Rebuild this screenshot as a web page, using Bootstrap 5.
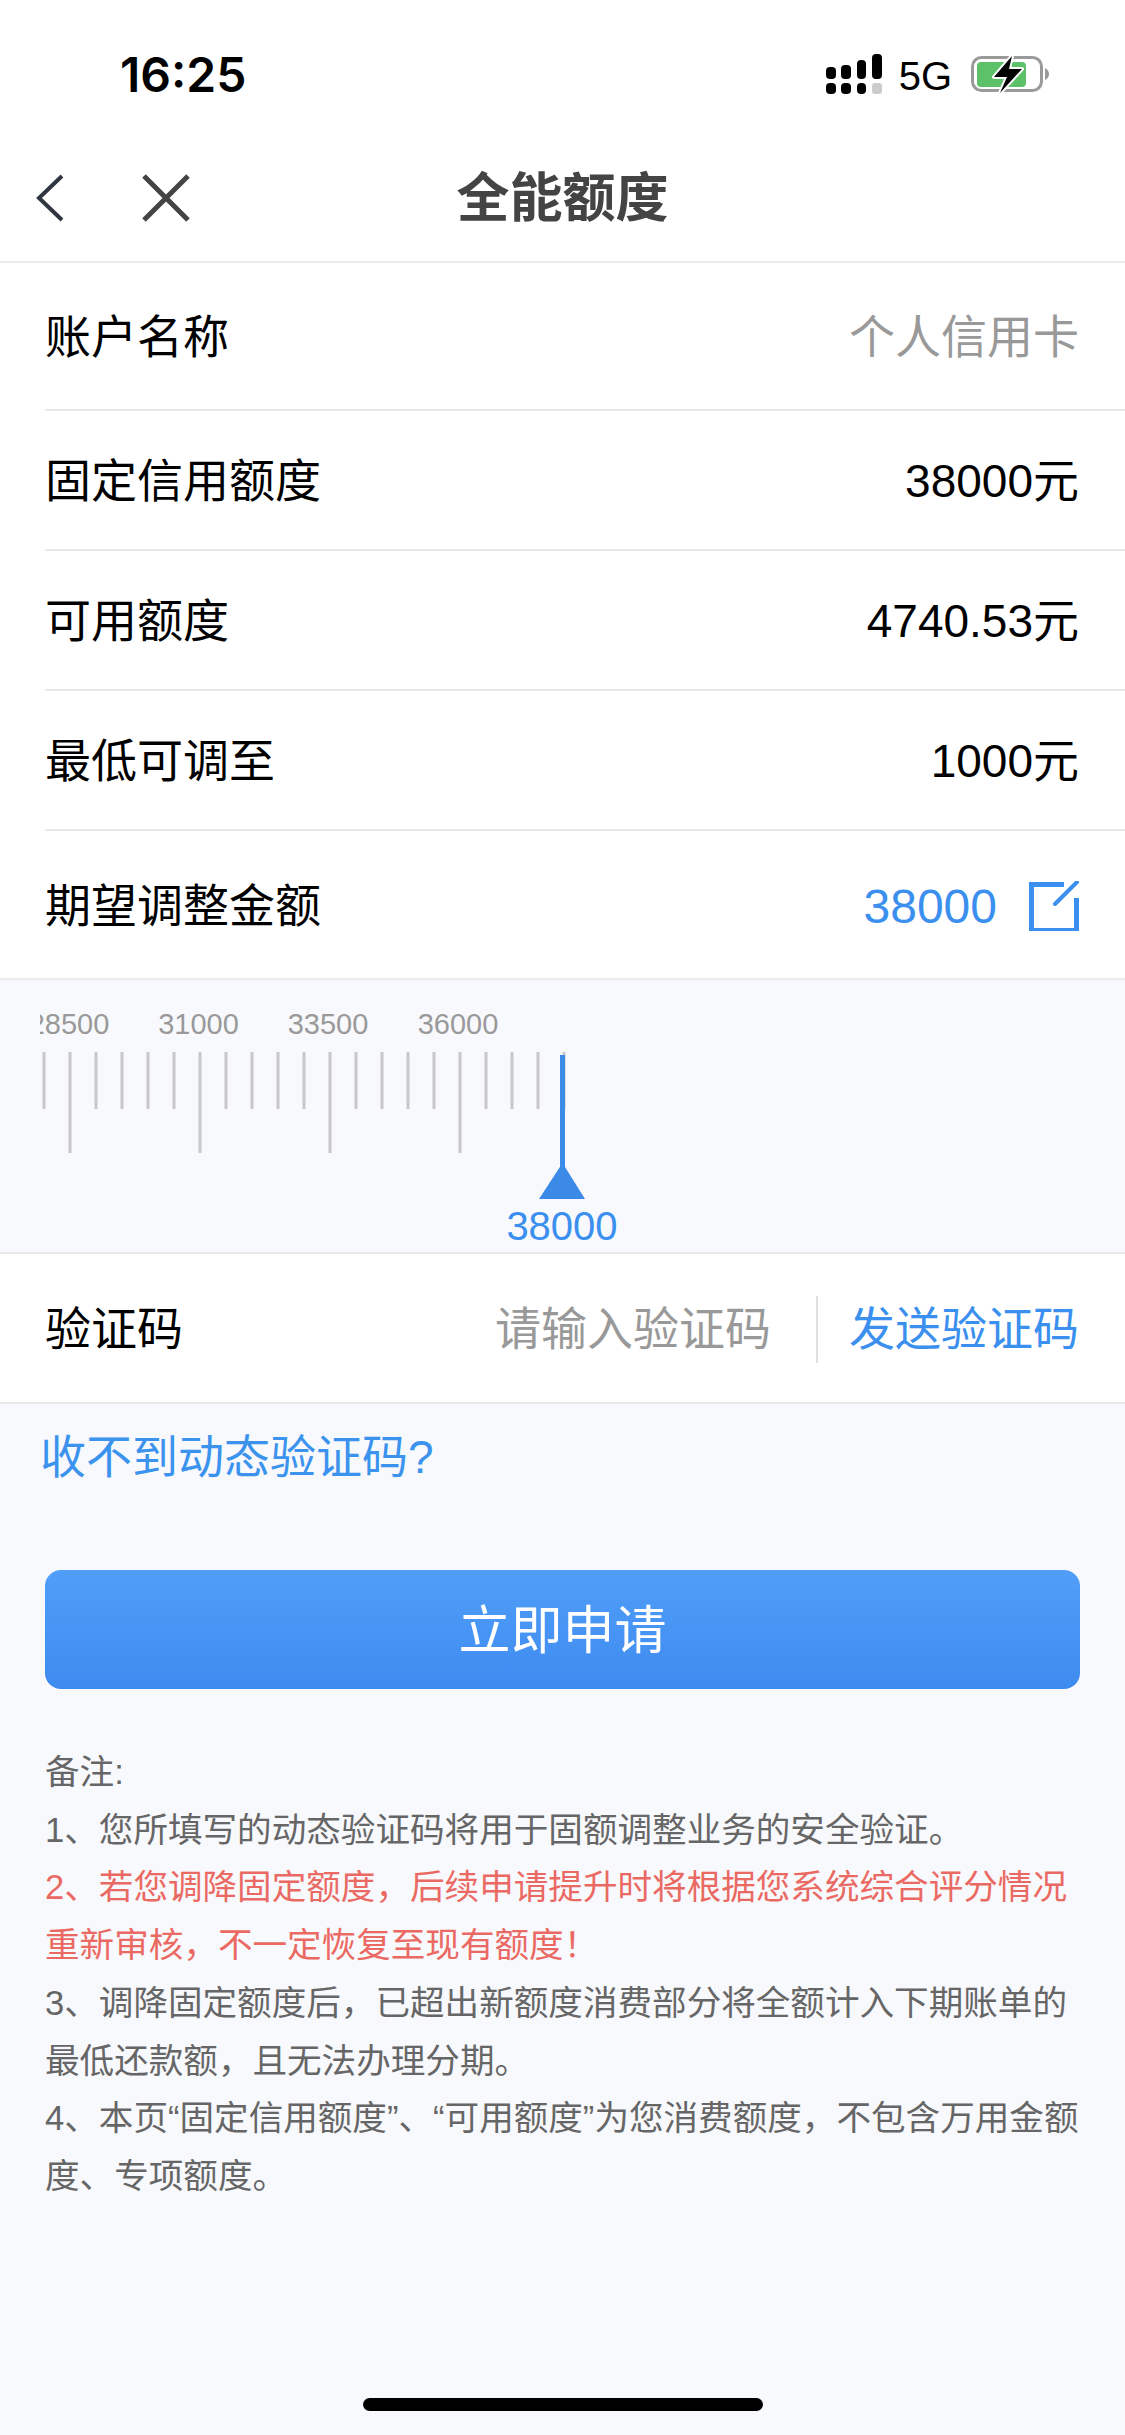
<!DOCTYPE html>
<html lang="zh-CN">
<head>
    <meta charset="UTF-8">
    <meta name="viewport" content="width=device-width, initial-scale=1.0">
    <title>全能额度</title>
    <link href="https://cdn.jsdelivr.net/npm/bootstrap@5.3.2/dist/css/bootstrap.min.css" rel="stylesheet">
    <style>
        body {
            background: #f8f9fd;
            color: #000;
            font-family: "Liberation Sans", "Noto Sans CJK SC", sans-serif;
        }
        /* Statusleiste + Titel */
        .top-head { background: #fff; border-bottom: 2px solid #ececec; height: 263px; }
        .status-line { height: 130px; padding: 18px 76px 0 120px; }
        .clock { font-family: Inter, "Liberation Sans", sans-serif; font-size: 48px; font-weight: 600; line-height: 1; margin-top: 2px; }
        .net-label { font-size: 40px; line-height: 1; margin: 4px 19px 0 15px; }
        .title-line { height: 131px; padding-left: 36px; padding-top: 4px; }
        .title-text { display: block; font-size: 53px; font-weight: 700; color: #444; line-height: 1; padding-top: 2px; }
        .title-box { left: 0; right: 0; text-align: center; pointer-events: none; }
        .close-ico { margin-left: 78px; }
        /* Zeilen */
        .info-list { background: #fff; border-radius: 0; }
        .info-row { padding: 0 0 0 45px; border: 0; font-size: 46px; line-height: 1; color: #000; }
        .info-inner { padding: 2px 46px 0 0; border-bottom: 2px solid #e8e8e8; height: 140px; }
        .info-row:first-child .info-inner { height: 148px; }
        .list-group-flush > .info-row:last-child { border-bottom: 2px solid #ececec; }
        .info-row:last-child .info-inner { height: 147px; border-bottom: 0; }
        .muted-val { color: #999; }
        .blue-val { color: #3b8fee; }
        .wish-val { font-size: 48px; padding-top: 2px; }
        .edit-ico { margin-left: 32px; }
        /* Lineal */
        .ruler-box { height: 274px; border-bottom: 2px solid #e8e8e8; }
        .ruler-box svg { display: block; }
        .ruler-lbl { font-size: 29px; fill: #999; text-anchor: middle; }
        .ruler-now { font-size: 40px; fill: #3b8fee; text-anchor: middle; }
        /* Verifizierung */
        .code-line { background: #fff; height: 150px; padding: 2px 46px 0 45px; border-bottom: 2px solid #e8e8e8; font-size: 46px; line-height: 1; }
        .code-input { border: 0; border-radius: 0; background: transparent; padding: 0; font-size: 46px; text-align: right; width: 320px; margin-left: auto; box-shadow: none; }
        .code-input::placeholder { color: #999; opacity: 1; }
        .code-sep { width: 2px; height: 67px; background: #e0e0e0; margin: 0 31px 0 45px; }
        .help-link { display: block; font-size: 46px; line-height: 1; color: #3b93ee; text-decoration: none; margin: 30px 0 0 40px; }
        .apply-btn { display: block; width: 1035px; height: 119px; margin: 90px 0 0 45px; padding-top: 8px; border: 0; border-radius: 16px; background: linear-gradient(#509ef8, #3e8bf0); color: #fff; font-size: 52px; line-height: 1; }
        .apply-btn:hover { color: #fff; background: linear-gradient(#509ef8, #3e8bf0); }
        .note-box { margin: 55px 30px 0 45px; font-size: 34.6px; line-height: 57.700px; color: #666; }
        .note-red { color: #ea6a63; }
        .home-bar { width: 400px; height: 13px; background: #000; border-radius: 7px; margin: auto auto 24px; }
    </style>
</head>
<body class="d-flex flex-column min-vh-100">
    <!-- Kopf -->
    <div class="top-head">
        <div class="status-line d-flex align-items-center">
            <span class="clock">16:25</span>
            <svg class="ms-auto" width="58" height="40" viewBox="0 0 58 40">
                <g fill="#000">
                    <rect x="0" y="13" width="10" height="12" rx="4"/>
                    <rect x="15" y="11" width="10" height="14" rx="4"/>
                    <rect x="31" y="6" width="9" height="19" rx="4"/>
                    <rect x="46" y="0" width="10" height="25" rx="4"/>
                    <rect x="0" y="29" width="10" height="11" rx="4"/>
                    <rect x="15" y="29" width="10" height="11" rx="4"/>
                    <rect x="31" y="29" width="9" height="11" rx="4"/>
                </g>
                <rect x="46" y="29" width="10" height="11" rx="3" fill="#ccc"/>
            </svg>
            <span class="net-label">5G</span>
            <svg width="78" height="38" viewBox="971 55 78 38">
                <rect x="972.500" y="57.500" width="69" height="33" rx="9" fill="none" stroke="#9a9a9a" stroke-width="3"/>
                <rect x="977" y="62" width="49" height="25" rx="4" fill="#5cc168"/>
                <path d="M1045 68q4 2 4 6t-4 6z" fill="#9a9a9a"/>
                <path d="M1012 56 994 77h13l-7 16 22-24h-13z" fill="#000" stroke="#fff" stroke-width="4" paint-order="stroke" stroke-linejoin="round"/>
            </svg>
        </div>
        <div class="title-line d-flex align-items-center position-relative">
            <svg width="28" height="48" viewBox="0 0 28 48"><path d="M26 2 3 24l23 22" fill="none" stroke="#2f3640" stroke-width="4"/></svg>
            <svg class="close-ico" width="48" height="48" viewBox="0 0 48 48"><path d="M2 2l44 44M46 2 2 46" fill="none" stroke="#444" stroke-width="5"/></svg>
            <div class="title-box position-absolute"><span class="title-text">全能额度</span></div>
        </div>
    </div>

    <!-- Angaben -->
    <ul class="list-group list-group-flush info-list">
        <li class="list-group-item info-row"><div class="info-inner d-flex justify-content-between align-items-center"><span>账户名称</span><span class="muted-val">个人信用卡</span></div></li>
        <li class="list-group-item info-row"><div class="info-inner d-flex justify-content-between align-items-center"><span>固定信用额度</span><span>38000元</span></div></li>
        <li class="list-group-item info-row"><div class="info-inner d-flex justify-content-between align-items-center"><span>可用额度</span><span>4740.53元</span></div></li>
        <li class="list-group-item info-row"><div class="info-inner d-flex justify-content-between align-items-center"><span>最低可调至</span><span>1000元</span></div></li>
        <li class="list-group-item info-row"><div class="info-inner d-flex align-items-center"><span>期望调整金额</span><span class="blue-val wish-val ms-auto">38000</span>
            <svg class="edit-ico" width="50" height="50" viewBox="0 0 50 50"><path d="M35 3.500H2.500v46h45V17" fill="none" stroke="#3b8fee" stroke-width="5"/><path d="M26 23 48 1" stroke="#3b8fee" stroke-width="4" stroke-linecap="round"/></svg>
        </div></li>
    </ul>

    <!-- Lineal -->
    <div class="ruler-box">
        <svg width="1125" height="272" viewBox="0 0 1125 272">
            <defs><clipPath id="rulerClip"><rect x="40" y="0" width="1085" height="272"/></clipPath></defs>
            <g clip-path="url(#rulerClip)">
                <text class="ruler-lbl" x="69" y="54">28500</text>
                <text class="ruler-lbl" x="198.500" y="54">31000</text>
                <text class="ruler-lbl" x="328" y="54">33500</text>
                <text class="ruler-lbl" x="458" y="54">36000</text>
            </g>
            <path d="M44 72v57M96 72v57M122 72v57M148 72v57M174 72v57M226 72v57M252 72v57M278 72v57M304 72v57M356 72v57M382 72v57M408 72v57M434 72v57M486 72v57M512 72v57M538 72v57M564 72v57M70 72v101M200 72v101M330 72v101M460 72v101" stroke="#c8c8c8" stroke-width="3" fill="none"/>
            <rect x="560" y="75" width="5" height="115" fill="#3b8ae8"/>
            <path d="M562.500 183 585 219h-46z" fill="#3b8ae8"/>
            <text class="ruler-now" x="562" y="260">38000</text>
        </svg>
    </div>

    <!-- Verifizierungscode -->
    <div class="code-line d-flex align-items-center">
        <span>验证码</span>
        <input type="text" class="form-control code-input" placeholder="请输入验证码">
        <span class="code-sep"></span>
        <span class="blue-val">发送验证码</span>
    </div>
    <a class="help-link" href="#">收不到动态验证码?</a>

    <button type="button" class="btn apply-btn">立即申请</button>

    <!-- Hinweise -->
    <div class="note-box">
        备注:<br>
        1、您所填写的动态验证码将用于固额调整业务的安全验证。<br>
        <span class="note-red">2、若您调降固定额度，后续申请提升时将根据您系统综合评分情况重新审核，不一定恢复至现有额度！</span><br>
        3、调降固定额度后，已超出新额度消费部分将全额计入下期账单的最低还款额，且无法办理分期。<br>
        4、本页“固定信用额度”、“可用额度”为您消费额度，不包含万用金额度、专项额度。
    </div>

    <div class="home-bar"></div>

    <script src="https://cdn.jsdelivr.net/npm/bootstrap@5.3.2/dist/js/bootstrap.bundle.min.js"></script>
</body>
</html>
